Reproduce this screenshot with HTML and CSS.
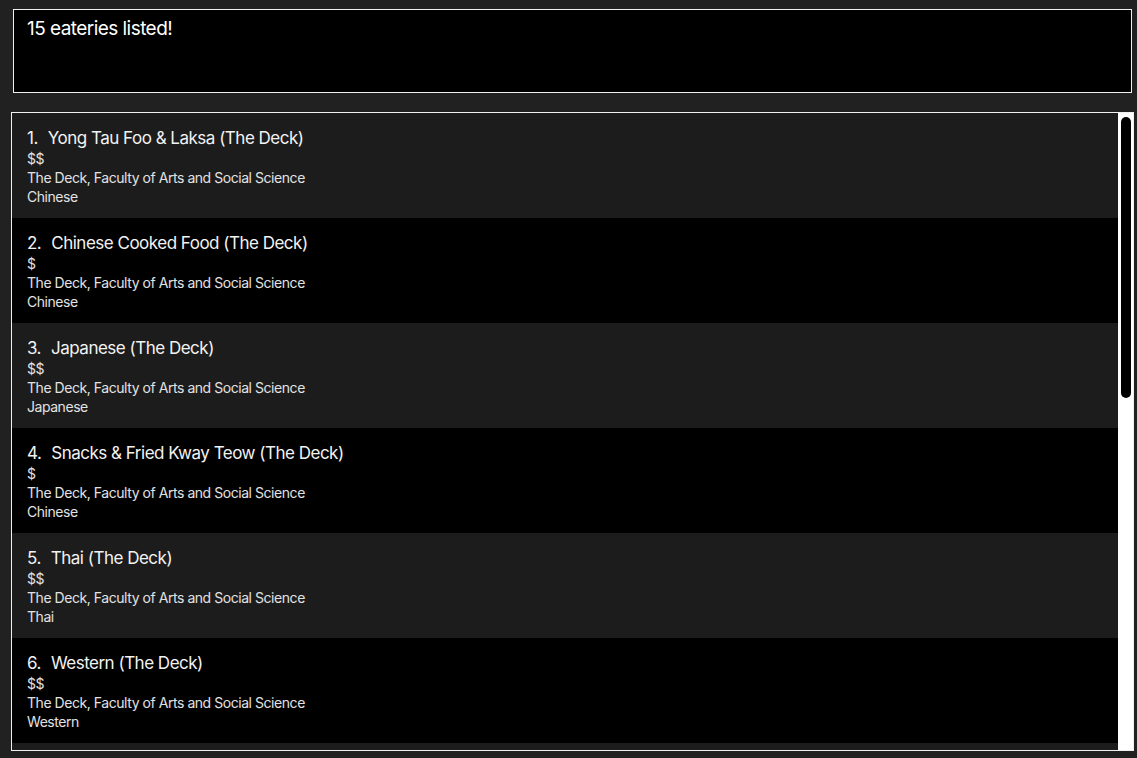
FILE: index.html
```html
<!DOCTYPE html>
<html>
<head>
<meta charset="utf-8">
<link rel="stylesheet" href="styles.css">
</head>
<body>
<div class="app">
  <div class="result">15 eateries listed!</div>
  <div class="list">
    <div class="list-body">
      <div class="cell alt">
        <div class="title"><span class="idx">1.</span>Yong Tau Foo &amp; Laksa (The Deck)</div>
        <div class="line">$$</div>
        <div class="line">The Deck, Faculty of Arts and Social Science</div>
        <div class="line">Chinese</div>
      </div>
      <div class="cell">
        <div class="title"><span class="idx">2.</span>Chinese Cooked Food (The Deck)</div>
        <div class="line">$</div>
        <div class="line">The Deck, Faculty of Arts and Social Science</div>
        <div class="line">Chinese</div>
      </div>
      <div class="cell alt">
        <div class="title"><span class="idx">3.</span>Japanese (The Deck)</div>
        <div class="line">$$</div>
        <div class="line">The Deck, Faculty of Arts and Social Science</div>
        <div class="line">Japanese</div>
      </div>
      <div class="cell">
        <div class="title"><span class="idx">4.</span>Snacks &amp; Fried Kway Teow (The Deck)</div>
        <div class="line">$</div>
        <div class="line">The Deck, Faculty of Arts and Social Science</div>
        <div class="line">Chinese</div>
      </div>
      <div class="cell alt">
        <div class="title"><span class="idx">5.</span>Thai (The Deck)</div>
        <div class="line">$$</div>
        <div class="line">The Deck, Faculty of Arts and Social Science</div>
        <div class="line">Thai</div>
      </div>
      <div class="cell">
        <div class="title"><span class="idx">6.</span>Western (The Deck)</div>
        <div class="line">$$</div>
        <div class="line">The Deck, Faculty of Arts and Social Science</div>
        <div class="line">Western</div>
      </div>
      <div class="cell alt stub"></div>
    </div>
    <div class="scrollbar"><div class="thumb"></div></div>
  </div>
</div>
</body>
</html>
```
FILE: styles.css
```css
html, body {
  margin: 0;
  padding: 0;
  background: #212121;
  height: 100%;
}
body {
  font-family: "Inter", "Liberation Sans", sans-serif;
  color: #e8e8e8;
  overflow: hidden;
}
.app {
  display: flex;
  flex-direction: column;
  padding: 9px 3px 7px 11px;
  height: 758px;
  box-sizing: border-box;
  gap: 19px;
}
.result {
  margin: 0 2px 0 2px;
  height: 84px;
  box-sizing: border-box;
  border: 1px solid #f0f0f0;
  background: #000;
  color: #fff;
  font-size: 19px;
  letter-spacing: -0.55px;
  padding: 7px 13px;
  flex: none;
}
.list {
  flex: 1;
  min-height: 0;
  border: 1px solid #f0f0f0;
  background: #000;
  display: flex;
}
.list-body {
  flex: 1;
  min-width: 0;
  overflow: hidden;
}
.scrollbar {
  flex: none;
  width: 15px;
  background: #fff;
  padding: 4px 2px 0 3px;
  box-sizing: border-box;
}
.thumb {
  height: 281px;
  background: #000;
  border-radius: 5px;
}
.cell {
  height: 105px;
  box-sizing: border-box;
  padding: 14px 15px 0 15px;
  background: #000;
}
.cell.alt {
  background: #1c1c1c;
}
.cell.stub {
  height: 7px;
}
.title {
  font-size: 17px;
  line-height: 22px;
  color: #f2f2f2;
  letter-spacing: -0.5px;
  height: 22px;
}
.idx {
  margin-right: 10px;
}
.line {
  font-size: 14px;
  line-height: 19px;
  color: #e2e2e2;
  letter-spacing: -0.45px;
}
```
